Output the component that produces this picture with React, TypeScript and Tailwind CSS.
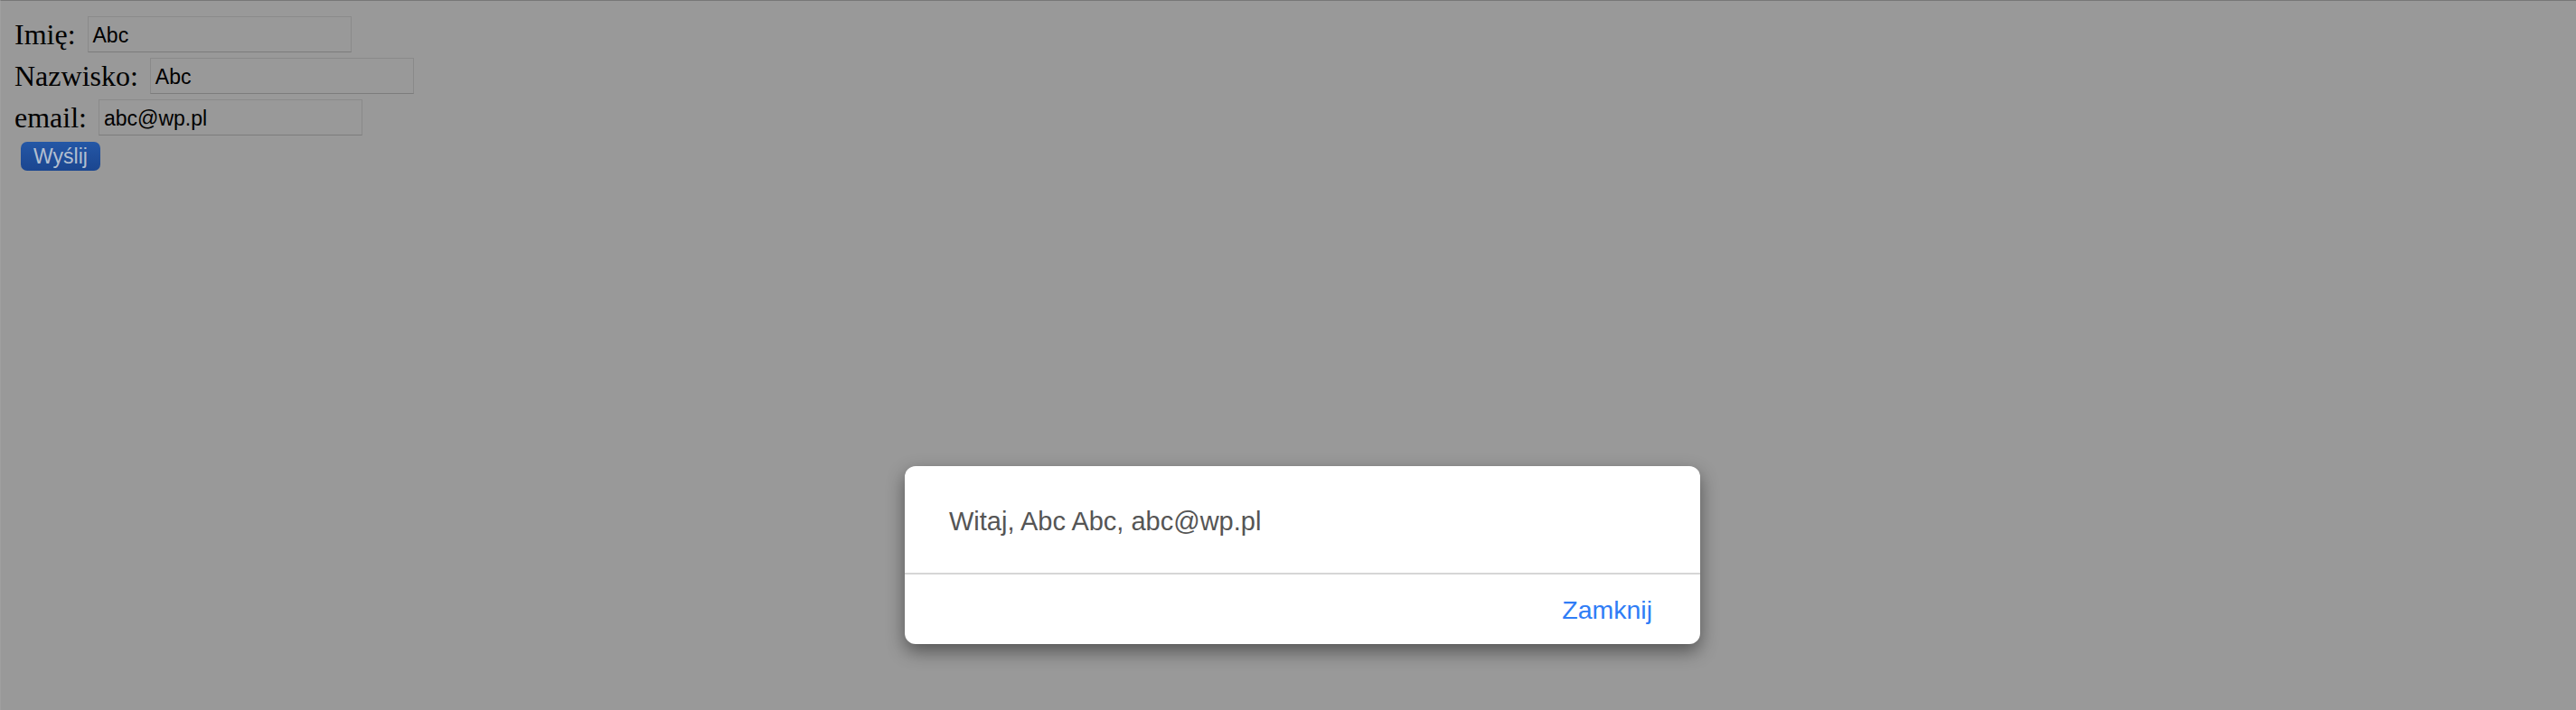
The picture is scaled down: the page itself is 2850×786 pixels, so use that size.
import React from "react";

export default function App() {
  const serif = { fontFamily: '"Liberation Serif", "Times New Roman", serif' };
  return (
    <div className="relative w-[2850px] h-[786px] overflow-hidden bg-[#999999] border-t border-t-[#777777] border-l border-l-[#a0a0a0]">
      <div className="flex flex-col pt-[17px] pl-[15px] gap-[6px]">
        <div className="flex items-center h-[40px] gap-[13px]">
          <span className="text-[32px] leading-[36px] text-black" style={serif}>Imię:</span>
          <div className="w-[292px] h-[40px] border border-[#8a8a8a] border-b-[#7c7c7c] flex items-center pl-[5px] pt-[3px] text-[23px] text-black font-['Liberation_Sans',Arial,sans-serif]">Abc</div>
        </div>
        <div className="flex items-center h-[40px] gap-[13px]">
          <span className="text-[32px] leading-[36px] text-black" style={serif}>Nazwisko:</span>
          <div className="w-[292px] h-[40px] border border-[#8a8a8a] border-b-[#7c7c7c] flex items-center pl-[5px] pt-[3px] text-[23px] text-black font-['Liberation_Sans',Arial,sans-serif]">Abc</div>
        </div>
        <div className="flex items-center h-[40px] gap-[13px]">
          <span className="text-[32px] leading-[36px] text-black" style={serif}>email:</span>
          <div className="w-[292px] h-[40px] border border-[#8a8a8a] border-b-[#7c7c7c] flex items-center pl-[5px] pt-[3px] text-[23px] text-black font-['Liberation_Sans',Arial,sans-serif]">abc@wp.pl</div>
        </div>
        <div className="pt-[1px] pl-[7px]">
          <div className="w-[88px] h-[32px] rounded-[7px] bg-gradient-to-b from-[#2457a6] to-[#1b4690] flex items-center justify-center text-[23px] text-[#b3bfd0] font-['Liberation_Sans',Arial,sans-serif]">Wyślij</div>
        </div>
      </div>

      <div className="absolute left-[1000px] top-[515px] w-[880px] h-[197px] bg-white rounded-[12px] shadow-[0_8px_20px_rgba(0,0,0,0.45)] flex flex-col overflow-hidden">
        <div className="h-[118px] flex items-center pl-[49px] pt-[6px] text-[29px] text-[#555555] font-['Liberation_Sans',Arial,sans-serif]">
          Witaj, Abc Abc, abc@wp.pl
        </div>
        <div className="h-[2px] bg-[#d6d6d6]" />
        <div className="flex-1 flex items-center justify-end pr-[53px] pt-[2px] text-[28.5px] text-[#2f7df6] font-['Liberation_Sans',Arial,sans-serif]">
          Zamknij
        </div>
      </div>
    </div>
  );
}
